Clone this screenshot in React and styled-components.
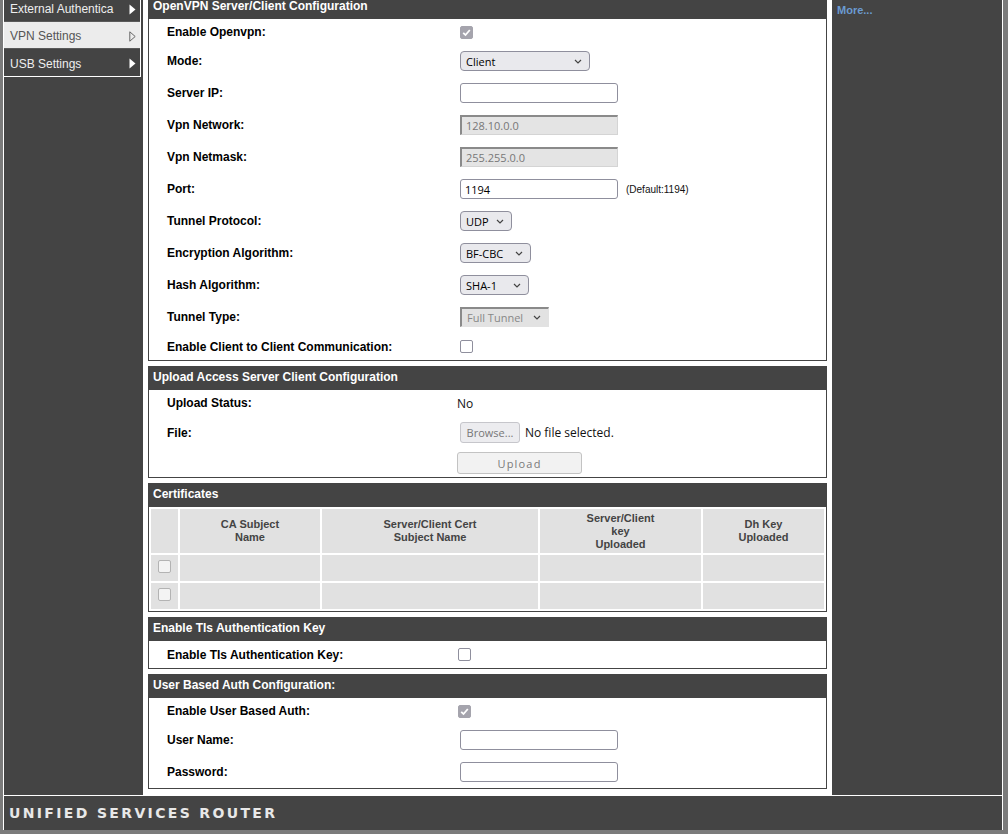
import React from 'react'
import styled, {createGlobalStyle} from 'styled-components'

const GlobalStyle = createGlobalStyle`
  html, body {
    margin: 0;
    padding: 0;
    background: #7b7b7b;
  }
  body {
    font-family: "Liberation Sans", Arial, sans-serif;
    height: 834px;
    overflow: hidden;
  }
`

const Frame = styled.div`
  width: 998px;
  margin: -5px 0 0 3px;
  border-left: 1px solid #fff;
  border-right: 1px solid #fff;
`

const Columns = styled.div`
  display: flex;
  align-items: stretch;
`

const Sidebar = styled.div`
  width: 139px;
  flex: none;
  background: #444;
`

const Menu = styled.ul`
  list-style: none;
  margin: 0;
  padding: 0;
  width: 136px;
  border-right: 1px solid #fff;
  border-bottom: 1px solid #fff;
`

const MenuItem = styled.li`
  height: 27px;
  box-sizing: border-box;
  display: flex;
  align-items: center;
  justify-content: space-between;
  padding: 2px 4px 0 6px;
  font-size: 12px;
  white-space: nowrap;
  color: ${p => p.$active ? '#555' : '#eee'};
  background: ${p => p.$active ? '#ececec' : '#444'};
  border-bottom: 1px solid #5a5a5a;
  &:last-child {
    border-bottom: none;
  }
`

const Main = styled.div`
  width: 679px;
  flex: none;
  background: #fff;
  padding: 0 5px 6px 5px;
`

const Aside = styled.div`
  flex: 1;
  background: #444;
  padding: 5px 5px;
`

const MoreLink = styled.a`
  color: #6b9bd1;
  font-size: 11px;
  font-weight: bold;
  text-decoration: none;
`

const Section = styled.div`
  margin-bottom: 5px;
  &:last-child {
    margin-bottom: 0;
  }
`

const SectionHead = styled.div`
  height: 24px;
  line-height: 23px;
  background: #444;
  color: #fff;
  font-size: 12px;
  font-weight: bold;
  padding-left: 5px;
`

const SectionBody = styled.div`
  border: 1px solid #444;
  border-top: none;
`

const Row = styled.div`
  display: grid;
  grid-template-columns: 311px 1fr;
  align-items: center;
  height: ${p => p.$h || 32}px;
`

const Label = styled.div`
  padding-left: 18px;
  font-size: 12px;
  font-weight: bold;
  color: #000;
`

const Control = styled.div`
  display: flex;
  align-items: center;
  gap: ${p => p.$gap || 5}px;
  margin-left: ${p => p.$shift || 0}px;
`

const Value = styled.span`
  font-family: "Open Sans", "Noto Sans", sans-serif;
  font-size: 12px;
  color: ${p => p.$muted ? '#777' : '#111'};
`

const Hint = styled.span`
  font-size: 10px;
  color: #111;
  margin-left: 3px;
`

const TextInput = styled.input`
  box-sizing: border-box;
  width: 158px;
  height: 20px;
  padding: 0 4px;
  font-family: "Open Sans", "Noto Sans", sans-serif;
  font-size: 11px;
  color: #000;
  background: #fff;
  border: 1px solid #8f8f9d;
  border-radius: 3px;
  outline: none;
  &:disabled {
    background: #e4e4e4;
    color: #777;
    border-radius: 0;
    border-top: 2px solid #8a8a8a;
    border-left: 2px solid #8a8a8a;
    border-right: 1px solid #d4d4d4;
    border-bottom: 1px solid #d4d4d4;
  }
`

const SelectBox = styled.div`
  box-sizing: border-box;
  width: ${p => p.$w}px;
  height: 20px;
  display: flex;
  align-items: center;
  justify-content: space-between;
  padding: 0 7px 0 5px;
  font-family: "Open Sans", "Noto Sans", sans-serif;
  font-size: 11px;
  color: ${p => p.$disabled ? '#888' : '#000'};
  background: ${p => p.$disabled ? '#e2e2e2' : '#e9e9ed'};
  border: 1px solid #8f8f9d;
  border-radius: 4px;
  ${p => p.$disabled && `
    border-radius: 0;
    border-top: 2px solid #8a8a8a;
    border-left: 2px solid #8a8a8a;
    border-right: 1px solid #e2e2e2;
    border-bottom: 1px solid #e2e2e2;
  `}
`

const Box = styled.span`
  box-sizing: border-box;
  display: inline-flex;
  align-items: center;
  justify-content: center;
  width: 13px;
  height: 13px;
  border-radius: 2px;
  border: 1px solid ${p => p.$checked ? '#a5a4ad' : p.$light ? '#b3b3b3' : '#8f8f9d'};
  background: ${p => p.$checked ? '#a5a4ad' : p.$light ? '#f3f3f3' : '#fff'};
`

const BrowseButton = styled.button`
  box-sizing: border-box;
  width: 60px;
  height: 21px;
  padding: 0;
  font-family: "Open Sans", "Noto Sans", sans-serif;
  font-size: 11px;
  color: #777;
  background: #ececef;
  border: 1px solid #c6c6cb;
  border-radius: 3px;
`

const UploadButton = styled.button`
  box-sizing: border-box;
  width: 125px;
  height: 22px;
  padding: 0;
  font-family: "Open Sans", "Noto Sans", sans-serif;
  font-size: 11px;
  letter-spacing: 1.2px;
  color: #7a7a7a;
  background: #f2f2f2;
  border: 1px solid #c3c3c3;
  border-radius: 3px;
`

const CertTable = styled.table`
  width: 100%;
  border-collapse: separate;
  border-spacing: 2px;
`

const Th = styled.th`
  width: ${p => p.$w ? `${p.$w}px` : 'auto'};
  height: 44px;
  padding: 0;
  background: #e1e1e1;
  color: #444;
  font-size: 11px;
  font-weight: bold;
  line-height: 13px;
  text-align: center;
`

const Td = styled.td`
  height: 26px;
  padding: 0;
  background: #e1e1e1;
  text-align: center;
  vertical-align: middle;
`

const Footer = styled.div`
  height: 34px;
  display: flex;
  align-items: center;
  padding-left: 5px;
  border-top: 1px solid #fff;
  background: #444;
  color: #e8e8e8;
  font-family: "DejaVu Sans", sans-serif;
  font-size: 14px;
  font-weight: bold;
  letter-spacing: 2.35px;
`

const Arrow = ({open}) => (
  <svg width="7" height="11" viewBox="0 0 7 11">
    {open
      ? <path d="M0.8 0.8 L6.2 5.5 L0.8 10.2 Z" fill="none" stroke="#666" strokeWidth="1"/>
      : <path d="M0.5 0.5 L6.5 5.5 L0.5 10.5 Z" fill="#fff"/>}
  </svg>
)

const Chevron = () => (
  <svg width="8" height="5" viewBox="0 0 8 5">
    <path d="M1 1 L4 4 L7 1" fill="none" stroke="#444" strokeWidth="1.2"/>
  </svg>
)

const Checkbox = ({checked, light}) => (
  <Box $checked={checked} $light={light}>
    {checked && (
      <svg width="11" height="11" viewBox="0 0 11 11">
        <path d="M2.2 5.8 L4.5 8 L8.8 3" fill="none" stroke="#fff" strokeWidth="1.8"/>
      </svg>
    )}
  </Box>
)

const Select = ({w, value, disabled}) => (
  <SelectBox $w={w} $disabled={disabled}>
    <span>{value}</span>
    <Chevron/>
  </SelectBox>
)

const menu = [
  {label: 'External Authentica'},
  {label: 'VPN Settings', active: true},
  {label: 'USB Settings'}
]

export default function App() {
  return (
    <>
      <GlobalStyle/>
      <Frame>
        <Columns>
          <Sidebar>
            <Menu>
              {menu.map(item => (
                <MenuItem key={item.label} $active={item.active}>
                  <span>{item.label}</span>
                  <Arrow open={item.active}/>
                </MenuItem>
              ))}
            </Menu>
          </Sidebar>

          <Main>
            <Section>
              <SectionHead>OpenVPN Server/Client Configuration</SectionHead>
              <SectionBody>
                <Row $h={26}>
                  <Label>Enable Openvpn:</Label>
                  <Control><Checkbox checked/></Control>
                </Row>
                <Row>
                  <Label>Mode:</Label>
                  <Control><Select w={130} value="Client"/></Control>
                </Row>
                <Row>
                  <Label>Server IP:</Label>
                  <Control><TextInput type="text" defaultValue=""/></Control>
                </Row>
                <Row>
                  <Label>Vpn Network:</Label>
                  <Control><TextInput type="text" defaultValue="128.10.0.0" disabled/></Control>
                </Row>
                <Row>
                  <Label>Vpn Netmask:</Label>
                  <Control><TextInput type="text" defaultValue="255.255.0.0" disabled/></Control>
                </Row>
                <Row>
                  <Label>Port:</Label>
                  <Control>
                    <TextInput type="text" defaultValue="1194"/>
                    <Hint>(Default:1194)</Hint>
                  </Control>
                </Row>
                <Row>
                  <Label>Tunnel Protocol:</Label>
                  <Control><Select w={52} value="UDP"/></Control>
                </Row>
                <Row>
                  <Label>Encryption Algorithm:</Label>
                  <Control><Select w={71} value="BF-CBC"/></Control>
                </Row>
                <Row>
                  <Label>Hash Algorithm:</Label>
                  <Control><Select w={69} value="SHA-1"/></Control>
                </Row>
                <Row>
                  <Label>Tunnel Type:</Label>
                  <Control><Select w={89} value="Full Tunnel" disabled/></Control>
                </Row>
                <Row $h={27}>
                  <Label>Enable Client to Client Communication:</Label>
                  <Control><Checkbox/></Control>
                </Row>
              </SectionBody>
            </Section>

            <Section>
              <SectionHead>Upload Access Server Client Configuration</SectionHead>
              <SectionBody>
                <Row $h={26}>
                  <Label>Upload Status:</Label>
                  <Control $shift={-3}><Value>No</Value></Control>
                </Row>
                <Row $h={33}>
                  <Label>File:</Label>
                  <Control>
                    <BrowseButton type="button">Browse...</BrowseButton>
                    <Value>No file selected.</Value>
                  </Control>
                </Row>
                <Row $h={28}>
                  <span/>
                  <Control $shift={-3}><UploadButton type="button">Upload</UploadButton></Control>
                </Row>
              </SectionBody>
            </Section>

            <Section>
              <SectionHead>Certificates</SectionHead>
              <SectionBody>
                <CertTable>
                  <thead>
                    <tr>
                      <Th $w={27}/>
                      <Th $w={140}>CA Subject<br/>Name</Th>
                      <Th $w={216}>Server/Client Cert<br/>Subject Name</Th>
                      <Th $w={161}>Server/Client<br/>key<br/>Uploaded</Th>
                      <Th>Dh Key<br/>Uploaded</Th>
                    </tr>
                  </thead>
                  <tbody>
                    {[0, 1].map(i => (
                      <tr key={i}>
                        <Td><Checkbox light/></Td>
                        <Td/>
                        <Td/>
                        <Td/>
                        <Td/>
                      </tr>
                    ))}
                  </tbody>
                </CertTable>
              </SectionBody>
            </Section>

            <Section>
              <SectionHead>Enable Tls Authentication Key</SectionHead>
              <SectionBody>
                <Row $h={27}>
                  <Label>Enable Tls Authentication Key:</Label>
                  <Control $shift={-2}><Checkbox/></Control>
                </Row>
              </SectionBody>
            </Section>

            <Section>
              <SectionHead>User Based Auth Configuration:</SectionHead>
              <SectionBody>
                <Row $h={26}>
                  <Label>Enable User Based Auth:</Label>
                  <Control $shift={-2}><Checkbox checked/></Control>
                </Row>
                <Row>
                  <Label>User Name:</Label>
                  <Control><TextInput type="text" defaultValue=""/></Control>
                </Row>
                <Row>
                  <Label>Password:</Label>
                  <Control><TextInput type="password" defaultValue=""/></Control>
                </Row>
              </SectionBody>
            </Section>
          </Main>

          <Aside>
            <MoreLink href="#">More...</MoreLink>
          </Aside>
        </Columns>

        <Footer>UNIFIED SERVICES ROUTER</Footer>
      </Frame>
    </>
  )
}
